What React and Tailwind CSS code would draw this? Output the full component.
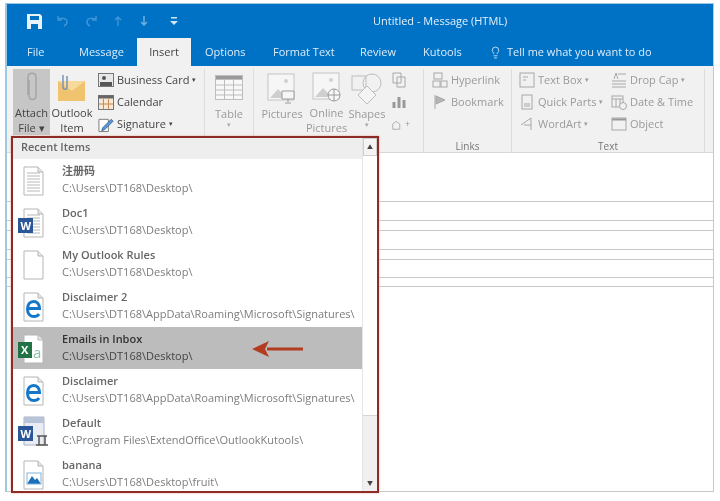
import { Lightbulb } from "lucide-react";

const FONT = "font-['Open_Sans','Noto_Sans_CJK_SC',sans-serif]";

const files = [
  { name: "注册码", path: "C:\\Users\\DT168\\Desktop\\", icon: "text" },
  { name: "Doc1", path: "C:\\Users\\DT168\\Desktop\\", icon: "word" },
  { name: "My Outlook Rules", path: "C:\\Users\\DT168\\Desktop\\", icon: "blank" },
  { name: "Disclaimer 2", path: "C:\\Users\\DT168\\AppData\\Roaming\\Microsoft\\Signatures\\", icon: "ie" },
  { name: "Emails in Inbox", path: "C:\\Users\\DT168\\Desktop\\", icon: "excel", active: true },
  { name: "Disclaimer", path: "C:\\Users\\DT168\\AppData\\Roaming\\Microsoft\\Signatures\\", icon: "ie" },
  { name: "Default", path: "C:\\Program Files\\ExtendOffice\\OutlookKutools\\", icon: "template" },
  { name: "banana", path: "C:\\Users\\DT168\\Desktop\\fruit\\", icon: "image" },
];

function Page({ children, lines }) {
  return (
    <svg width="36" height="32" viewBox="0 0 36 32">
      <path d="M9 3h14l5 5v23H9z" fill="#fff" stroke="#b5b5b5" />
      <path d="M23 3v5h5" fill="#e8e8e8" stroke="#b5b5b5" />
      {lines &&
        [9, 12, 15, 18, 21, 24, 27].map((y) => (
          <path key={y} d={`M12 ${y}h13`} stroke="#b8b8b8" />
        ))}
      {children}
    </svg>
  );
}

function FileIcon({ type }) {
  if (type === "text") return <Page lines />;
  if (type === "blank") return <Page />;
  if (type === "word")
    return (
      <Page lines>
        <rect x="3" y="12" width="15" height="15" fill="#2b5797" />
        <text x="5.5" y="23.5" fontSize="11" fontWeight="700" fill="#fff" fontFamily="Open Sans">W</text>
      </Page>
    );
  if (type === "ie")
    return (
      <Page>
        <path
          d="M13 18.5h11.5c0-4.5-2.500-7-6-7s-6 3-6 7.500 2.500 7.500 6.500 7.500c2.500 0 4-1 5-2.500"
          fill="none"
          stroke="#1577c9"
          strokeWidth="3"
        />
      </Page>
    );
  if (type === "excel")
    return (
      <Page>
        <rect x="3" y="10" width="14" height="16" fill="#217346" />
        <text x="6" y="22" fontSize="11" fontWeight="700" fill="#fff" fontFamily="Open Sans">X</text>
        <text x="18" y="26" fontSize="15" fill="#8cc5a5" fontFamily="Open Sans">a</text>
      </Page>
    );
  if (type === "template")
    return (
      <svg width="36" height="34" viewBox="0 0 36 34">
        <path d="M9 2h20v28H9z" fill="#e9edf3" stroke="#aab3c0" />
        <path d="M9 2h20v6H9z" fill="#b7c3d6" />
        <rect x="3" y="11" width="15" height="15" fill="#2b5797" />
        <text x="5.5" y="22.5" fontSize="11" fontWeight="700" fill="#fff" fontFamily="Open Sans">W</text>
        <path d="M21 30h12M24 30v-9h6v9M22 21h10" fill="none" stroke="#555" strokeWidth="1.5" />
      </svg>
    );
  return (
    <Page>
      <path d="M12 26l5-8 3 4 2-2 4 6z" fill="#1b6fb8" />
      <rect x="12" y="15" width="14" height="11" fill="none" stroke="#7fb2dc" />
    </Page>
  );
}

function Big({ label, icon, w, disabled, active, drop }) {
  return (
    <div
      className={`flex flex-col items-center h-[66px] ${w} ${active ? "bg-[#c6c6c6]" : ""} ${
        disabled ? "text-[#9a9a9a]" : "text-[#444]"
      }`}
    >
      <div className="h-[37px] flex items-center justify-center">{icon}</div>
      <div className="text-[11px] leading-[15px] text-center whitespace-pre-line">{label}</div>
      {drop && <div className="text-[7px] leading-[7px] text-[#aaa]">▾</div>}
    </div>
  );
}

function Small({ icon, label, caret, disabled }) {
  return (
    <div className={`flex items-center gap-[3px] h-[22px] text-[11px] whitespace-nowrap ${disabled ? "text-[#9a9a9a]" : "text-[#444]"}`}>
      <span className="w-[16px] h-[16px] flex items-center justify-center">{icon}</span>
      <span>{label}</span>
      {caret && <span className="text-[7px]">▾</span>}
    </div>
  );
}

function Group({ w, label, children }) {
  return (
    <div className={`${w} h-[84px] shrink-0 border-r border-[#dcdcdc] flex flex-col`}>
      <div className="flex-1 flex">{children}</div>
      <div className="h-[12px] text-[10px] leading-[12px] mb-[1px] text-center text-[#777]">{label}</div>
    </div>
  );
}

const Glyph = ({ children, size = 16 }) => (
  <svg width={size} height={size} viewBox="0 0 16 16" fill="none" stroke="#a8a8a8">
    {children}
  </svg>
);

function PictureIcon({ extra }) {
  return (
    <svg width="30" height="32" viewBox="0 0 30 32" fill="none">
      <rect x="1" y="2" width="26" height="26" fill="#f6f6f6" stroke="#c4c4c4" />
      <path d="M3 26l8-9 5 5 3-2 6 6z" fill="#cfcfcf" />
      <circle cx="19" cy="9" r="2" fill="#d0d0d0" />
      {extra}
    </svg>
  );
}

function FileRow({ file }) {
  return (
    <div className={`flex h-[42px] shrink-0 items-center ${file.active ? "bg-[#bcbcbc]" : ""}`}>
      <div className="w-[49px] pl-[2px] shrink-0">
        <FileIcon type={file.icon} />
      </div>
      <div className="min-w-0 whitespace-nowrap pb-[2px]">
        <div className={`text-[11px] leading-[16px] font-semibold ${file.active ? "text-[#333]" : "text-[#666]"}`}>
          {file.name}
        </div>
        <div className={`text-[11px] leading-[17px] ${file.active ? "text-[#444]" : "text-[#7c7c7c]"}`}>
          {file.path}
        </div>
      </div>
    </div>
  );
}

function AttachMenu() {
  return (
    <div className="absolute left-[4px] top-[132px] w-[368px] h-[357px] border-2 border-[#8c2c25] bg-white flex shadow-[0_0_2px_#e8a79e]">
      <div className="flex-1 min-w-0 flex flex-col">
        <div className="h-[21px] shrink-0 bg-[#eeeeee] pl-[8px] text-[11px] leading-[17px] font-semibold text-[#666]">
          Recent Items
        </div>
        {files.map((f) => (
          <FileRow key={f.name} file={f} />
        ))}
      </div>
      <div className="w-[15px] shrink-0 flex flex-col border-l border-[#e4e4e4]">
        <div className="h-[18px] bg-[#f4f4f4] border border-[#cfcfcf] flex items-center justify-center text-[6px] text-[#444]">▲</div>
        <div className="h-[260px] bg-white border-b border-[#d5d5d5]" />
        <div className="flex-1 bg-[#f0f0f0]" />
        <div className="h-[16px] bg-[#f0f0f0] flex items-center justify-center text-[6px] text-[#444]">▼</div>
      </div>
      <svg className="absolute left-[238px] top-[200px]" width="54" height="22" viewBox="0 0 54 22">
        <path d="M52 11H16" stroke="#b23c1f" strokeWidth="3" />
        <path d="M1 11l17-8-4 8 4 8z" fill="#b23c1f" />
      </svg>
    </div>
  );
}

export default function App() {
  return (
    <div className={`w-[720px] h-[501px] bg-white overflow-hidden pt-[3px] pl-[5px] pr-[6px] ${FONT} blur-[0.4px]`}>
      <div className="relative h-[489px] border-t border-l-2 border-r border-b border-t-[#9cc8e4] border-l-[#9cc8e4] border-r-[#c8c8c8] border-b-[#c8c8c8] flex flex-col">
        {/* title bar */}
        <div className="h-[34px] shrink-0 bg-[#0072c6] flex items-center text-white">
          <div className="w-[366px] pl-[20px] flex items-center gap-[14px] shrink-0">
            <svg width="15" height="15" viewBox="0 0 15 15">
              <path d="M0 0h13l2 2v13H0z" fill="#e8f2fa" />
              <path d="M3 2h9v4H3zM4 10h7v5H4z" fill="#0072c6" />
            </svg>
            <svg width="14" height="12" viewBox="0 0 14 12" fill="none" stroke="#3d94d6" strokeWidth="1.5">
              <path d="M2 1v4h4M2 5c3-3 9-2 9 2 0 2-1 3-3 4" />
            </svg>
            <svg width="14" height="12" viewBox="0 0 14 12" fill="none" stroke="#3d94d6" strokeWidth="1.5">
              <path d="M12 1v4H8M12 5C9 2 3 3 3 7c0 2 1 3 3 4" />
            </svg>
            <svg width="12" height="12" viewBox="0 0 12 12" fill="none" stroke="#3d94d6" strokeWidth="1.5">
              <path d="M6 11V2M3 5l3-3 3 3" />
            </svg>
            <svg width="12" height="12" viewBox="0 0 12 12" fill="none" stroke="#6fb0e2" strokeWidth="1.5">
              <path d="M6 1v9M3 7l3 3 3-3" />
            </svg>
            <svg className="ml-[6px]" width="8" height="10" viewBox="0 0 8 10" fill="#cfe4f5">
              <path d="M1 1h6v1.5H1zM0 5h8L4 9z" />
            </svg>
          </div>
          <div className="text-[11px] text-[#e4f0fa]">Untitled - Message (HTML)</div>
        </div>

        {/* tabs */}
        <div className="h-[28px] shrink-0 bg-[#0072c6] flex text-[11px] leading-[28px] text-[#dcecf8] whitespace-nowrap">
          <div className="w-[72px] pl-[20px]">File</div>
          <div className="w-[58px]">Message</div>
          <div className="w-[54px] bg-[#f1f1f1] text-[#444] text-center">Insert</div>
          <div className="w-[82px] pl-[14px]">Options</div>
          <div className="w-[87px]">Format Text</div>
          <div className="w-[63px]">Review</div>
          <div className="w-[66px]">Kutools</div>
          <div className="flex items-center gap-[5px]">
            <Lightbulb size={13} strokeWidth={1.5} />
            <span>Tell me what you want to do</span>
          </div>
        </div>

        {/* ribbon */}
        <div className="h-[87px] shrink-0 bg-[#f1f1f1] pt-[3px] pl-[6px] flex border-b border-[#d8d8d8]">
          <Group w="w-[192px]" label="">
            <Big
              w="w-[37px]"
              active
              label={"Attach\nFile ▾"}
              icon={
                <svg width="14" height="32" viewBox="0 0 14 32" fill="none" stroke="#a5a5a5" strokeWidth="1.5">
                  <path d="M4 9v15c0 6 7 6 7 0V6C11 1 3 1 3 6v18" />
                </svg>
              }
            />
            <Big
              w="w-[44px]"
              label={"Outlook\nItem"}
              icon={
                <svg width="30" height="30" viewBox="0 0 30 30">
                  <path d="M1 9h27v20H1z" fill="#f0c46f" />
                  <path d="M1 9l14 10L28 9" fill="#f7d99a" />
                  <path d="M6 3v12c0 3 4 3 4 0V4" fill="none" stroke="#7f93b5" strokeWidth="1.5" />
                </svg>
              }
            />
            <div className="ml-[4px] flex flex-col">
              <Small
                caret
                label="Business Card"
                icon={
                  <svg width="16" height="14" viewBox="0 0 16 14">
                    <rect x=".5" y=".5" width="15" height="13" fill="#e8e8e8" stroke="#777" />
                    <rect x="2" y="9" width="12" height="4" fill="#555" />
                    <circle cx="6" cy="5" r="2" fill="#555" />
                  </svg>
                }
              />
              <Small
                label="Calendar"
                icon={
                  <svg width="16" height="15" viewBox="0 0 16 15">
                    <rect x=".5" y=".5" width="15" height="14" fill="#f7e8d8" stroke="#777" />
                    <path d="M.5 .5h15v3H.5z" fill="#666" />
                    <path d="M5.5 4v10M10.5 4v10M1 9h14" stroke="#c98a4b" />
                  </svg>
                }
              />
              <Small
                caret
                label="Signature"
                icon={
                  <svg width="17" height="17" viewBox="0 0 17 17" fill="none">
                    <path d="M1 3h10v13H1z" fill="#fff" stroke="#777" />
                    <path d="M5 12l9-9 2 2-9 9-3 1z" fill="#5e9bd6" stroke="#35689c" />
                  </svg>
                }
              />
            </div>
          </Group>
          <Group w="w-[49px]" label="">
            <Big
              w="w-full"
              disabled
              drop
              label="Table"
              icon={
                <svg width="28" height="26" viewBox="0 0 28 26" fill="none" stroke="#bdbdbd">
                  <rect x=".5" y=".5" width="27" height="24" fill="#f8f8f8" />
                  <path d="M.5 .5h27v4H.5z" fill="#9a9a9a" />
                  <path d="M1 10h26M1 15h26M1 20h26M9.5 5v19M18.5 5v19" />
                </svg>
              }
            />
          </Group>
          <Group w="w-[170px]" label="">
            <div className="w-[5px]" />
            <Big
              w="w-[46px]"
              disabled
              label="Pictures"
              icon={
                <PictureIcon
                  extra={<path d="M15 19h12v8H15zM21 27v3M18 31h6" fill="#f6f6f6" stroke="#9a9a9a" />}
                />
              }
            />
            <Big
              w="w-[43px]"
              disabled
              label={"Online\nPictures"}
              icon={
                <PictureIcon
                  extra={
                    <g stroke="#9a9a9a" fill="#f6f6f6">
                      <circle cx="22" cy="24" r="6" />
                      <path d="M16 24h12M22 18v12" />
                    </g>
                  }
                />
              }
            />
            <Big
              w="w-[38px]"
              disabled
              drop
              label="Shapes"
              icon={
                <svg width="32" height="32" viewBox="0 0 32 32" fill="none" stroke="#bdbdbd">
                  <rect x="1" y="4" width="14" height="14" />
                  <circle cx="21" cy="11" r="9" />
                  <path d="M16 14l9 9-9 9-9-9z" fill="#f4f4f4" />
                </svg>
              }
            />
            <div className="flex flex-col ml-[5px]">
              <div className="h-[22px] flex items-center">
                <Glyph>
                  <path d="M2 1h8v10H2zM6 5h8v10H6z" />
                </Glyph>
              </div>
              <div className="h-[22px] flex items-center">
                <Glyph>
                  <path d="M3 14V8M8 14V3M13 14V6" stroke="#999" strokeWidth="3" />
                </Glyph>
              </div>
              <div className="h-[22px] flex items-center text-[9px] text-[#999]">
                <Glyph size={14}>
                  <path d="M2 14V8l4-3 4 3v6z" />
                </Glyph>
                +
              </div>
            </div>
          </Group>
          <Group w="w-[88px]" label="Links">
            <div className="pl-[8px] flex flex-col">
              <Small
                disabled
                label="Hyperlink"
                icon={
                  <Glyph>
                    <rect x="2" y="1" width="8" height="6" />
                    <rect x="1" y="9" width="7" height="6" />
                    <rect x="9" y="9" width="6" height="6" />
                  </Glyph>
                }
              />
              <Small
                disabled
                label="Bookmark"
                icon={
                  <Glyph>
                    <path d="M3 1v14" />
                    <path d="M4 2l9 4-9 4z" fill="#b5b5b5" />
                  </Glyph>
                }
              />
            </div>
          </Group>
          <Group w="w-[193px]" label="Text">
            <div className="pl-[7px] w-[99px] flex flex-col">
              <Small
                disabled
                caret
                label="Text Box"
                icon={
                  <Glyph>
                    <rect x="1" y="1" width="14" height="14" />
                    <path d="M4 5h5M4 8h3" />
                  </Glyph>
                }
              />
              <Small
                disabled
                caret
                label="Quick Parts"
                icon={
                  <Glyph>
                    <rect x="3" y="1" width="10" height="14" />
                    <path d="M5 10h6M5 12h6" />
                  </Glyph>
                }
              />
              <Small
                disabled
                caret
                label="WordArt"
                icon={
                  <Glyph>
                    <path d="M2 9l10-7v12M5 9h7" />
                  </Glyph>
                }
              />
            </div>
            <div className="flex flex-col">
              <Small
                disabled
                caret
                label="Drop Cap"
                icon={
                  <Glyph>
                    <path d="M1 9h14M1 12h14M1 15h14M7 2h8M3 7l2-6 2 6" />
                  </Glyph>
                }
              />
              <Small
                disabled
                label="Date & Time"
                icon={
                  <Glyph>
                    <rect x="1" y="2" width="11" height="11" />
                    <path d="M1 5h11M5 5v8M9 5v8" />
                    <circle cx="12" cy="12" r="3.5" fill="#f1f1f1" />
                  </Glyph>
                }
              />
              <Small
                disabled
                label="Object"
                icon={
                  <Glyph>
                    <rect x="1" y="2" width="14" height="12" />
                    <path d="M1 3.5h14" strokeWidth="2" stroke="#999" />
                  </Glyph>
                }
              />
            </div>
          </Group>
        </div>

        {/* message header lines, mostly hidden behind the menu */}
        <div className="flex-1 flex flex-col">
          <div className="h-[48px] border-b border-[#c9c9c9] box-content" />
          <div className="h-[19px] border-b border-[#c9c9c9]" />
          <div className="h-[10px] border-b border-[#c9c9c9]" />
          <div className="h-[19px] border-b border-[#c9c9c9]" />
          <div className="h-[10px] border-b border-[#c9c9c9]" />
          <div className="h-[18px] border-b border-[#c9c9c9]" />
          <div className="h-[9px] border-b border-[#c9c9c9]" />
        </div>

        <AttachMenu />
      </div>
    </div>
  );
}
